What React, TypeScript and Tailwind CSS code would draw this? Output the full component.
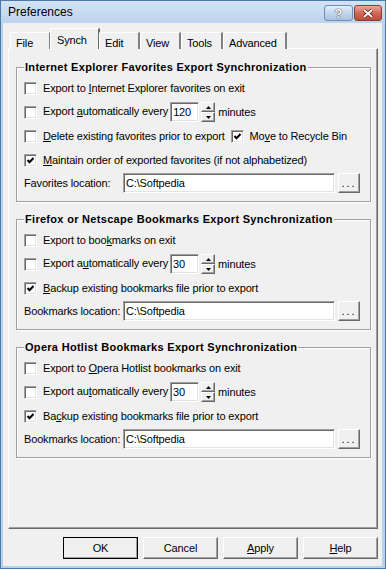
import React from 'react';

const raised =
  'bg-[#f0f0f0] border border-t-white border-l-white border-r-[#696969] border-b-[#696969] shadow-[inset_-1px_-1px_0_#a0a0a0]';
const sunken =
  'bg-white border border-t-[#a0a0a0] border-l-[#a0a0a0] border-b-white border-r-white shadow-[inset_1px_1px_0_#696969,inset_-1px_-1px_0_#e3e3e3]';

function U({ children }: { children: React.ReactNode }) {
  return <span className="underline underline-offset-[1px]">{children}</span>;
}

function Check({ checked = false }: { checked?: boolean }) {
  return (
    <span className={`w-[13px] h-[13px] shrink-0 flex items-center justify-center ${sunken}`}>
      {checked && (
        <svg width="9" height="9" viewBox="0 0 9 9">
          <path d="M1.5 4 L3.5 6.2 L7.5 2" fill="none" stroke="#000" strokeWidth="2" />
        </svg>
      )}
    </span>
  );
}

function Row({ checked, children }: { checked?: boolean; children: React.ReactNode }) {
  return (
    <div className="h-[24px] flex items-center gap-[6px] whitespace-nowrap">
      <Check checked={checked} />
      <span>{children}</span>
    </div>
  );
}

function Spin({ value }: { value: string }) {
  return (
    <span className="inline-flex items-center align-middle ml-[2px]">
      <span className={`w-[29px] h-[20px] px-[2px] flex items-center ${sunken}`}>{value}</span>
      <span className="ml-[2px] flex flex-col w-[14px] h-[20px]">
        <span className={`h-[10px] flex items-center justify-center ${raised}`}>
          <svg width="5" height="3" viewBox="0 0 5 3"><path d="M2.5 0 L5 3 L0 3 Z" fill="#000" /></svg>
        </span>
        <span className={`h-[10px] flex items-center justify-center ${raised}`}>
          <svg width="5" height="3" viewBox="0 0 5 3"><path d="M0 0 L5 0 L2.5 3 Z" fill="#000" /></svg>
        </span>
      </span>
      <span className="ml-[3px]">minutes</span>
    </span>
  );
}

function Location({ label }: { label: string }) {
  return (
    <div className="h-[22px] flex items-center whitespace-nowrap">
      <span className="w-[99px] shrink-0">{label}</span>
      <span className={`w-[212px] h-[20px] px-[2px] flex items-center ${sunken}`}>C:\Softpedia</span>
      <span className={`ml-[3px] w-[22px] h-[20px] flex items-end justify-center pb-[3px] leading-none tracking-[2px] ${raised}`}>
        ...
      </span>
    </div>
  );
}

function Group({ title, children, className = '' }: { title: string; children: React.ReactNode; className?: string }) {
  return (
    <fieldset
      className={`border border-[#a0a0a0] shadow-[inset_1px_1px_0_#fff,1px_1px_0_#fff] pl-[7px] pr-[7px] pt-[2px] pb-[7px] ${className}`}
    >
      <legend className="font-bold tracking-[0.3px] px-[1px] leading-[14px] bg-[#f0f0f0] whitespace-nowrap">{title}</legend>
      {children}
    </fieldset>
  );
}

const tabs = ['File', 'Synch', 'Edit', 'View', 'Tools', 'Advanced'];
const tabW = [41, 50, 41, 41, 42, 64];

export default function App() {
  return (
    <div className="w-[386px] h-[569px] flex flex-col bg-[#b9d1ea] border border-[#4d7aa8] font-['Liberation_Sans',Arial,sans-serif] text-[11px] tracking-[-0.15px] text-black overflow-hidden select-none">
      {/* Title bar */}
      <div className="h-[22px] shrink-0 flex items-center bg-gradient-to-b from-[#d3e3f4] to-[#bcd3ec] pl-[7px] pr-[3px]">
        <span className="text-[12px] tracking-normal flex-1">Preferences</span>
        <div className="flex gap-[1px] self-start mt-[4px]">
          <span className="w-[29px] h-[16px] rounded-[3px] border border-[#6d8fb5] bg-gradient-to-b from-[#e4eef9] via-[#c3d6ec] to-[#a9c3e2] flex items-center justify-center text-white font-bold text-[13px] leading-none [text-shadow:0_0_1px_#333,0_0_1px_#333]">
            ?
          </span>
          <span className="w-[28px] h-[16px] rounded-[3px] border border-[#8a3b32] bg-gradient-to-b from-[#e9a99c] via-[#d0685a] to-[#c04a3a] flex items-center justify-center">
            <svg width="12" height="9" viewBox="0 0 12 9">
              <path d="M2 1 L10 8 M10 1 L2 8" stroke="#4a1a14" strokeWidth="3.4" />
              <path d="M2 1 L10 8 M10 1 L2 8" stroke="#fff" strokeWidth="2" />
            </svg>
          </span>
        </div>
      </div>

      {/* Client area */}
      <div className="flex-1 flex flex-col bg-[#f0f0f0] ml-[2px] mr-[3px] mb-[2px] pl-[5px] pr-[4px] pt-[5px]">
        <div className="flex items-end h-[21px] pl-[2px] -mb-[1px] relative z-10">
          {tabs.map((t, i) =>
            t === 'Synch' ? (
              <div
                key={t}
                style={{ width: tabW[i] }}
                className="h-[21px] -mx-[1px] bg-[#f0f0f0] border-t border-l border-white border-r-2 border-r-[#696969] rounded-tl-[2px] pl-[6px] pt-[3px]"
              >
                {t}
              </div>
            ) : (
              <div
                key={t}
                style={{ width: tabW[i] }}
                className="h-[17px] bg-[#f0f0f0] border-t border-l border-white border-r-2 border-r-[#808080] rounded-tl-[2px] pl-[5px] pt-[2px]"
              >
                {t}
              </div>
            )
          )}
        </div>

        <div className="h-[481px] border border-t-white border-l-white border-r-[#696969] border-b-[#696969] shadow-[inset_-1px_-1px_0_#a0a0a0] pl-[7px] pr-[6px] pt-[11px] flex flex-col">
          <Group title="Internet Explorer Favorites Export Synchronization">
            <Row>
              Export to <U>I</U>nternet Explorer favorites on exit
            </Row>
            <Row>
              Export <U>a</U>utomatically every
              <Spin value="120" />
            </Row>
            <div className="h-[24px] flex items-center gap-[6px] whitespace-nowrap">
              <Check />
              <span>
                <U>D</U>elete existing favorites prior to export
              </span>
              <Check checked />
              <span>
                Mo<U>v</U>e to Recycle Bin
              </span>
            </div>
            <Row checked>
              <U>M</U>aintain order of exported favorites (if not alphabetized)
            </Row>
            <Location label="Favorites location:" />
          </Group>

          <Group title="Firefox or Netscape Bookmarks Export Synchronization" className="mt-[10px]">
            <Row>
              Export to boo<U>k</U>marks on exit
            </Row>
            <Row>
              Export a<U>u</U>tomatically every
              <Spin value="30" />
            </Row>
            <Row checked>
              <U>B</U>ackup existing bookmarks file prior to export
            </Row>
            <Location label="Bookmarks location:" />
          </Group>

          <Group title="Opera Hotlist Bookmarks Export Synchronization" className="mt-[10px]">
            <Row>
              Export to <U>O</U>pera Hotlist bookmarks on exit
            </Row>
            <Row>
              Export au<U>t</U>omatically every
              <Spin value="30" />
            </Row>
            <Row checked>
              Ba<U>c</U>kup existing bookmarks file prior to export
            </Row>
            <Location label="Bookmarks location:" />
          </Group>
        </div>

        <div className="flex justify-end gap-[5px] mt-[8px]">
          {[['OK'], ['Cancel'], ['A', 'pply'], ['H', 'elp']].map((b, i) => (
            <div
              key={i}
              className={`w-[75px] h-[22px] flex items-center justify-center ${raised} ${i === 0 ? 'outline outline-1 outline-[#000] -outline-offset-1' : ''}`}
            >
              {b.length === 2 ? (
                <span>
                  <U>{b[0]}</U>
                  {b[1]}
                </span>
              ) : (
                b[0]
              )}
            </div>
          ))}
        </div>
      </div>
    </div>
  );
}
